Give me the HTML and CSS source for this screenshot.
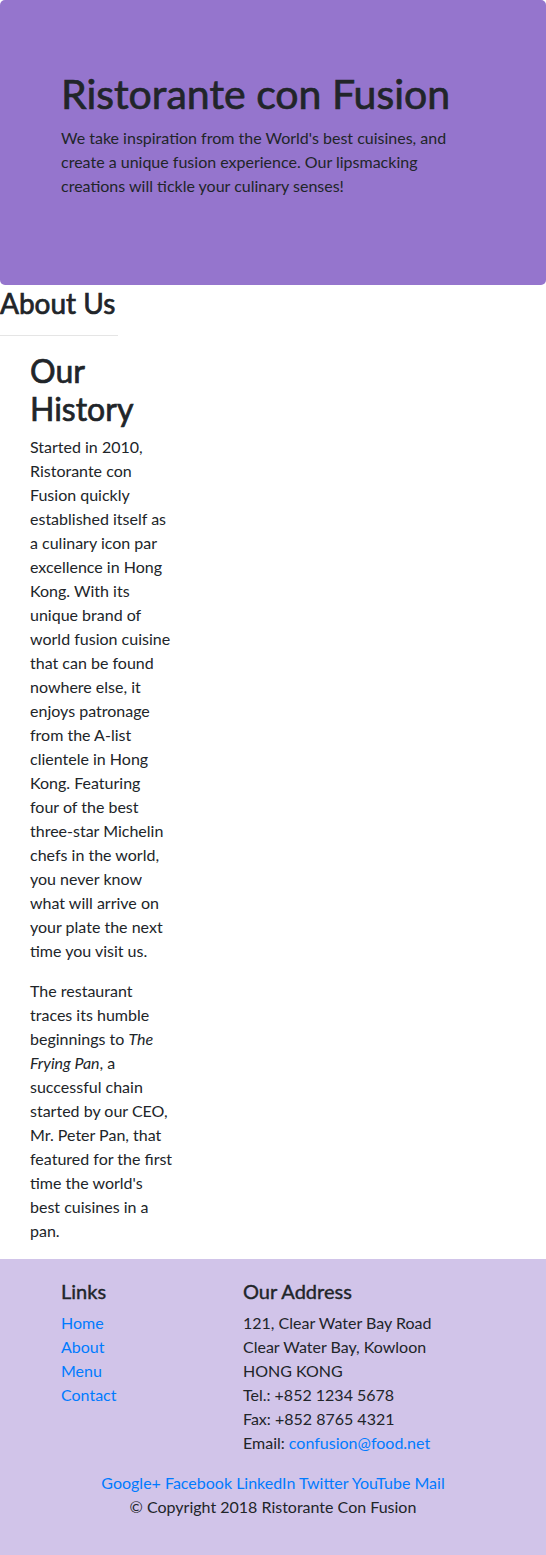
FILE: index.html
```html
<!DOCTYPE html>
<html lang="en">
<head>
<meta charset="utf-8">
<title>Ristorante con Fusion: About Us</title>
<link rel="stylesheet" href="styles.css">
</head>
<body>
<header class="jumbotron">
  <div class="jumbo-inner">
    <h1 class="jumbo-title">Ristorante con Fusion</h1>
    <p class="jumbo-text">We take inspiration from the World's best cuisines, and create a unique fusion experience. Our lipsmacking creations will tickle your culinary senses!</p>
  </div>
</header>

<section class="about">
  <div class="about-head">
    <h3 class="about-title">About Us</h3>
    <hr class="rule">
  </div>
  <div class="history">
    <h2 class="history-title">Our History</h2>
    <p class="history-text">Started in 2010, Ristorante con Fusion quickly established itself as a culinary icon par excellence in Hong Kong. With its unique brand of world fusion cuisine that can be found nowhere else, it enjoys patronage from the A-list clientele in Hong Kong. Featuring four of the best three-star Michelin chefs in the world, you never know what will arrive on your plate the next time you visit us.</p>
    <p class="history-text">The restaurant traces its humble beginnings to <em>The Frying Pan</em>, a successful chain started by our CEO, Mr. Peter Pan, that featured for the first time the world's best cuisines in a pan.</p>
  </div>
</section>

<footer class="footer">
  <div class="footer-cols">
    <div class="footer-links">
      <h5 class="footer-title">Links</h5>
      <ul class="link-list">
        <li><a href="#">Home</a></li>
        <li><a href="#">About</a></li>
        <li><a href="#">Menu</a></li>
        <li><a href="#">Contact</a></li>
      </ul>
    </div>
    <div class="footer-address">
      <h5 class="footer-title">Our Address</h5>
      <address class="address">
        121, Clear Water Bay Road<br>
        Clear Water Bay, Kowloon<br>
        HONG KONG<br>
        Tel.: +852 1234 5678<br>
        Fax: +852 8765 4321<br>
        Email: <a href="#">confusion@food.net</a>
      </address>
    </div>
  </div>
  <div class="social">
    <a href="#">Google+</a>
    <a href="#">Facebook</a>
    <a href="#">LinkedIn</a>
    <a href="#">Twitter</a>
    <a href="#">YouTube</a>
    <a href="#">Mail</a>
  </div>
  <p class="copyright">© Copyright 2018 Ristorante Con Fusion</p>
</footer>
</body>
</html>
```
FILE: styles.css
```css
* { box-sizing: border-box; }

body {
  margin: 0;
  font-family: Lato, "Liberation Sans", sans-serif;
  font-size: 16px;
  line-height: 24px;
  color: #212529;
  background: #fff;
}

a {
  color: #007bff;
  text-decoration: none;
}

.jumbotron {
  background: #9575cd;
  border-radius: 5px;
  padding: 70px 61px 71px;
}

.jumbo-title,
.about-title,
.history-title,
.footer-title {
  font-weight: 400;
  -webkit-text-stroke: 0.7px currentColor;
}

.jumbo-title {
  margin: 0 0 8px;
  font-size: 41px;
  line-height: 48px;
  color: #212529;
}

.jumbo-text {
  margin: 0 0 16px;
}

.about-head {
  width: 118px;
}

.about-title {
  margin: 0;
  padding-top: 2px;
  font-size: 28px;
  line-height: 33.6px;
  white-space: nowrap;
}

.rule {
  margin: 14px 0 16px;
  border: 0;
  border-top: 1px solid rgba(0, 0, 0, 0.1);
}

.history {
  width: 172.5px;
  padding-left: 30px;
}

.history-title {
  margin: 0 0 7px;
  font-size: 32px;
  line-height: 38.4px;
}

.history-text {
  margin: 0 0 16px;
}

.footer {
  background: #d1c4e9;
  padding: 20px 0 20px;
}

.footer-cols {
  display: flex;
  padding-left: 61px;
}

.footer-links {
  width: 182px;
}

.footer-title {
  margin: 0 0 8px;
  font-size: 20px;
  line-height: 24px;
  -webkit-text-stroke: 0.4px currentColor;
}

.link-list {
  list-style: none;
  margin: 0;
  padding: 0;
}

.address {
  font-style: normal;
  margin: 0 0 16px;
}

.social {
  text-align: center;
}

.copyright {
  margin: 0 0 16px;
  text-align: center;
}
```
